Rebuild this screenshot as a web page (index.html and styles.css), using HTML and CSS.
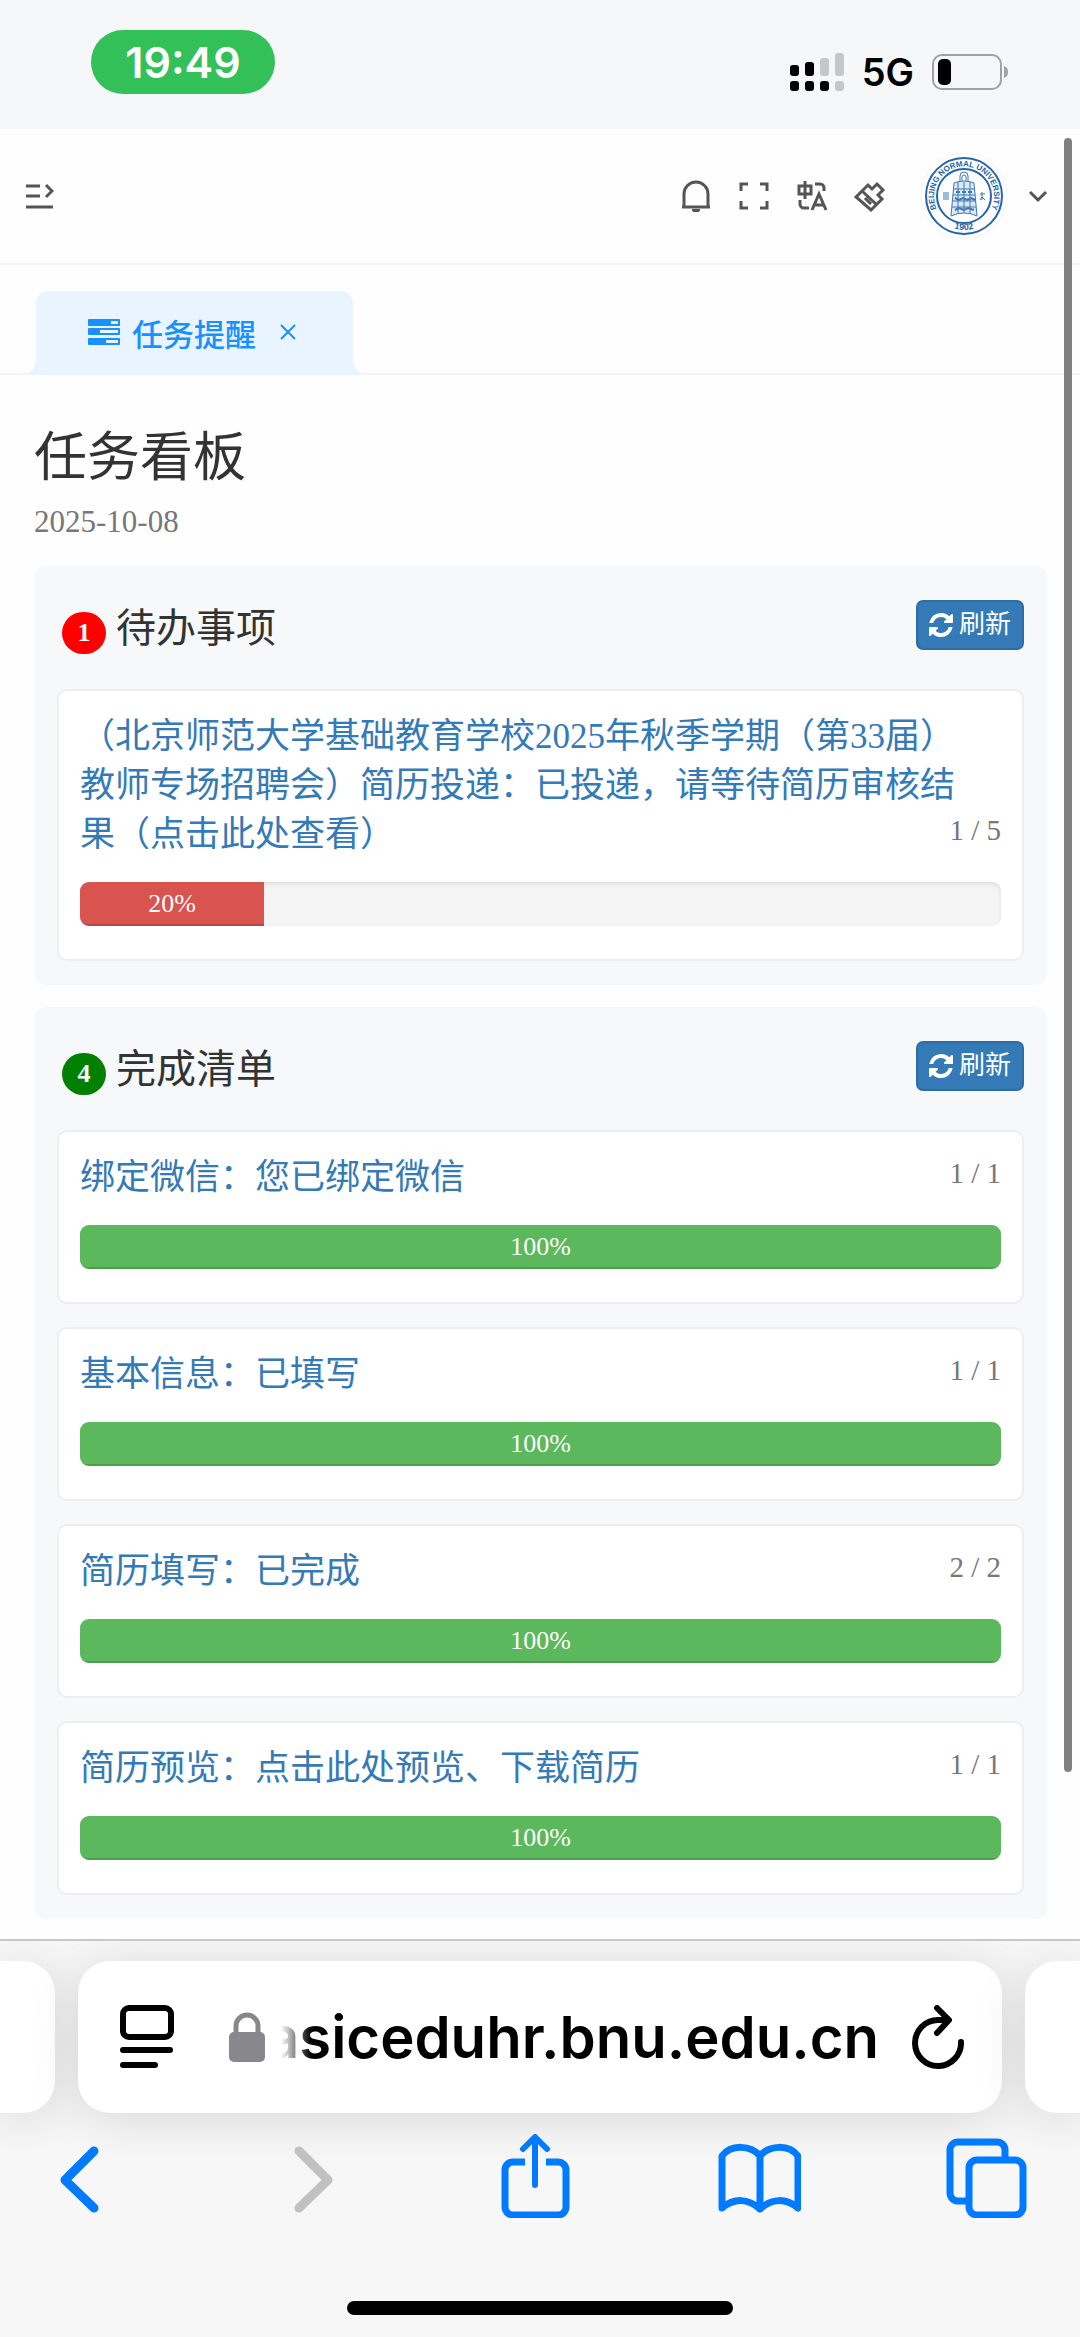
FILE: index.html
```html
<!DOCTYPE html>
<html lang="zh-CN">
<head>
    <meta charset="UTF-8">
    <meta name="viewport" content="width=device-width, initial-scale=1.0">
    <title>任务提醒</title>
    <link rel="stylesheet" href="styles.css">
</head>
<body>
    <div class="status-bar">
        <span class="clock">19:49</span>
        <div class="status-right">
            <svg width="54" height="38" viewBox="0 0 54 38">
                <g fill="#000">
                    <rect x="0" y="12" width="9" height="11" rx="3"/>
                    <rect x="15" y="9" width="9" height="14" rx="3"/>
                    <rect x="0" y="28" width="9" height="10" rx="3"/>
                    <rect x="15" y="28" width="9" height="10" rx="3"/>
                    <rect x="30" y="28" width="9" height="10" rx="3"/>
                </g>
                <g fill="#c6c7c9">
                    <rect x="30" y="5" width="9" height="18" rx="3"/>
                    <rect x="45" y="0" width="9" height="23" rx="3"/>
                    <rect x="45" y="28" width="9" height="10" rx="3"/>
                </g>
            </svg>
            <span class="network">5G</span>
            <svg width="76" height="36" viewBox="0 0 76 36">
                <rect x="1" y="1" width="68" height="34" rx="9" fill="none" stroke="#a0a1a3" stroke-width="2"/>
                <rect x="6" y="5" width="13" height="26" rx="5" fill="#000"/>
                <path d="M72 12c3 1 4 3 4 6s-1 5-4 6z" fill="#a0a1a3"/>
            </svg>
        </div>
    </div>

    <header class="header">
        <button class="icon-btn" type="button" aria-label="展开菜单">
            <svg width="28" height="26" viewBox="0 0 28 26" fill="none" stroke="#555" stroke-width="3">
                <path d="M0 3h14M0 13h14M0 24h27M20 2l6 6-6 6"/>
            </svg>
        </button>
        <div class="header-tools">
            <button class="icon-btn" type="button" aria-label="消息">
                <svg width="32" height="32" viewBox="0 0 32 32" fill="none" stroke="#555" stroke-width="3">
                    <path d="M4 27V14a12 12 0 0 1 24 0v13M2 27h28"/>
                    <path d="M12 29h8a4 4 0 0 1-8 0z" fill="#555" stroke="none"/>
                </svg>
            </button>
            <button class="icon-btn" type="button" aria-label="全屏">
                <svg width="32" height="32" viewBox="0 0 32 32" fill="none" stroke="#555" stroke-width="3">
                    <path d="M10 4H3v7M22 4h7v7M10 28H3v-7M22 28h7v-7"/>
                </svg>
            </button>
            <button class="icon-btn" type="button" aria-label="语言">
                <svg width="32" height="32" viewBox="0 0 32 32" fill="none" stroke="#555" stroke-width="3">
                    <path d="M3 6h12v8H3zM9 1v18"/>
                    <path d="M19 4h5a4 4 0 0 1 4 4v3M4 20v4a4 4 0 0 0 4 4h5"/>
                    <path d="M16 30l7-16 7 16M18 25h10"/>
                </svg>
            </button>
            <button class="icon-btn" type="button" aria-label="主题">
                <svg width="32" height="32" viewBox="0 0 32 32" fill="none" stroke="#555" stroke-width="3">
                    <path d="M2 17L14 5l4 4 5-5 6 6-5 5 4 4-11 11z"/>
                    <path d="M8 11l15 14M11 18l6 6"/>
                </svg>
            </button>
            <svg class="avatar" width="88" height="88" viewBox="0 0 88 88" role="img" aria-label="Beijing Normal University">
                <circle cx="44" cy="44" r="43" fill="#fff" stroke="#f4f4f4"/>
                <circle cx="44" cy="44" r="38" fill="none" stroke="#2465ab" stroke-width="2"/>
                <circle cx="44" cy="44" r="27" fill="none" stroke="#2465ab" stroke-width="2"/>
                <path id="ringTop" d="M22.600 65.400A30 30 0 1 1 65.400 65.400" fill="none"/>
                <path id="ringBottom" d="M30 75a34 34 0 0 0 28 0" fill="none"/>
                <text class="seal-text"><textPath href="#ringTop" startOffset="50%">BEIJING NORMAL UNIVERSITY</textPath></text>
                <text class="seal-text seal-year"><textPath href="#ringBottom" startOffset="50%">1902</textPath></text>
                <g fill="none" stroke="#3d78b5" stroke-width="1">
                    <path d="M40 30v-6a4 4 0 0 1 8 0v6M42 30v-5a2 2 0 0 1 4 0v5"/>
                    <path d="M34 31q10-4 20 0l3 33q-6-3-13-3t-13 3z" fill="#dce8f4"/>
                    <path d="M34 37h20M33 43h22M33 49h23M32 55h24M38 30v32M44 30v31M50 30v32"/>
                    <path d="M36 40h4M42 40h4M48 40h4M35 46l4 2 4-2 4 2 4-2 4 2M35 58l4-2 5 2 4-2 6 2" stroke-width="2"/>
                    <path d="M24 40v8M26 40v8M28 40v8M60 42h5M62 40v8M60 48l2-3 3 3"/>
                </g>
            </svg>
            <button class="icon-btn" type="button" aria-label="用户菜单">
                <svg width="20" height="20" viewBox="0 0 20 20" fill="none" stroke="#555" stroke-width="3">
                    <path d="M2 6l8 8 8-8"/>
                </svg>
            </button>
        </div>
    </header>

    <nav class="tabs">
        <a class="tab" href="#">
            <svg width="32" height="26" viewBox="0 0 32 26">
                <g fill="#1890ff">
                    <rect width="32" height="7" rx="1"/>
                    <rect y="9" width="32" height="7" rx="1"/>
                    <rect y="19" width="32" height="7" rx="1"/>
                </g>
                <g fill="#e8f4ff">
                    <rect x="23" y="2" width="7" height="3"/>
                    <rect x="12" y="11" width="18" height="3"/>
                    <rect x="18" y="21" width="12" height="3"/>
                </g>
            </svg>
            <span>任务提醒</span>
            <svg class="tab-close" width="16" height="16" viewBox="0 0 16 16" stroke="#1890ff" stroke-width="2">
                <path d="M1 1l14 14M15 1L1 15"/>
            </svg>
        </a>
    </nav>

    <main class="board">
        <h1>任务看板</h1>
        <p class="date">2025-10-08</p>

        <section class="panel">
            <div class="panel-head">
                <span class="badge todo">1</span>
                <h2>待办事项</h2>
                <button class="refresh" type="button">
                    <svg width="24" height="24" viewBox="0 0 1536 1536" fill="#fff"><path d="M1511 928q0 5-1 7-64 268-268 434.500T764 1536q-146 0-282.500-55T238 1324l-129 129q-19 19-45 19t-45-19-19-45V960q0-26 19-45t45-19h448q26 0 45 19t19 45-19 45l-137 137q71 66 161 102t187 36q134 0 250-65t186-179q11-17 53-117 8-23 30-23h192q13 0 22.500 9.500t9.500 22.500zm25-800v448q0 26-19 45t-45 19h-448q-26 0-45-19t-19-45 19-45l138-138Q969 256 768 256q-134 0-250 65T332 500q-11 17-53 117-8 23-30 23H50q-13 0-22.500-9.500T18 608v-7q65-268 270-434.500T768 0q146 0 284 55.500T1297 212l130-129q19-19 45-19t45 19 19 45z"/></svg>
                    刷新
                </button>
            </div>
            <div class="card">
                <div class="card-text">
                    <a href="#">（北京师范大学基础教育学校2025年秋季学期（第33届）教师专场招聘会）简历投递：已投递，请等待简历审核结果（点击此处查看）</a>
                    <span class="count">1 / 5</span>
                </div>
                <div class="progress"><div class="bar danger" style="width: 20%">20%</div></div>
            </div>
        </section>

        <section class="panel">
            <div class="panel-head">
                <span class="badge done">4</span>
                <h2>完成清单</h2>
                <button class="refresh" type="button">
                    <svg width="24" height="24" viewBox="0 0 1536 1536" fill="#fff"><path d="M1511 928q0 5-1 7-64 268-268 434.500T764 1536q-146 0-282.500-55T238 1324l-129 129q-19 19-45 19t-45-19-19-45V960q0-26 19-45t45-19h448q26 0 45 19t19 45-19 45l-137 137q71 66 161 102t187 36q134 0 250-65t186-179q11-17 53-117 8-23 30-23h192q13 0 22.500 9.500t9.500 22.500zm25-800v448q0 26-19 45t-45 19h-448q-26 0-45-19t-19-45 19-45l138-138Q969 256 768 256q-134 0-250 65T332 500q-11 17-53 117-8 23-30 23H50q-13 0-22.500-9.500T18 608v-7q65-268 270-434.500T768 0q146 0 284 55.500T1297 212l130-129q19-19 45-19t45 19 19 45z"/></svg>
                    刷新
                </button>
            </div>
            <div class="card">
                <div class="card-text">
                    <a href="#">绑定微信：您已绑定微信</a>
                    <span class="count">1 / 1</span>
                </div>
                <div class="progress"><div class="bar success" style="width: 100%">100%</div></div>
            </div>
            <div class="card">
                <div class="card-text">
                    <a href="#">基本信息：已填写</a>
                    <span class="count">1 / 1</span>
                </div>
                <div class="progress"><div class="bar success" style="width: 100%">100%</div></div>
            </div>
            <div class="card">
                <div class="card-text">
                    <a href="#">简历填写：已完成</a>
                    <span class="count">2 / 2</span>
                </div>
                <div class="progress"><div class="bar success" style="width: 100%">100%</div></div>
            </div>
            <div class="card">
                <div class="card-text">
                    <a href="#">简历预览：点击此处预览、下载简历</a>
                    <span class="count">1 / 1</span>
                </div>
                <div class="progress"><div class="bar success" style="width: 100%">100%</div></div>
            </div>
        </section>
    </main>

    <footer class="browser-bar">
        <div class="address-row">
            <div class="pill side left"></div>
            <div class="pill address">
                <button class="icon-btn" type="button" aria-label="页面菜单">
                    <svg width="54" height="64" viewBox="0 0 54 64" fill="none" stroke="#000" stroke-width="6" stroke-linecap="round">
                        <rect x="3" y="3" width="48" height="29" rx="6"/>
                        <path d="M3 45h47M3 60h32"/>
                    </svg>
                </button>
                <svg class="lock" width="36" height="50" viewBox="0 0 36 50">
                    <rect y="20" width="36" height="30" rx="5" fill="#88888c"/>
                    <path d="M7 22V14a11 11 0 0 1 22 0v8" fill="none" stroke="#88888c" stroke-width="5"/>
                </svg>
                <div class="url"><span>asiceduhr.bnu.edu.cn</span></div>
                <button class="icon-btn" type="button" aria-label="重新加载">
                    <svg width="52" height="64" viewBox="0 0 52 64" fill="none" stroke="#000" stroke-width="6" stroke-linecap="round" stroke-linejoin="round">
                        <path d="M49 37a23 23 0 1 1-23-22h9"/>
                        <path d="M25 3l12 12-12 13"/>
                    </svg>
                </button>
            </div>
            <div class="pill side right"></div>
        </div>
        <div class="toolbar">
            <button class="icon-btn" type="button" aria-label="后退">
                <svg width="84" height="84" viewBox="0 0 84 84" fill="none" stroke="#007aff" stroke-width="9" stroke-linecap="round" stroke-linejoin="round">
                    <path d="M57 17L28 46l29 28"/>
                </svg>
            </button>
            <button class="icon-btn" type="button" aria-label="前进" disabled>
                <svg width="84" height="84" viewBox="0 0 84 84" fill="none" stroke="#c1c1c1" stroke-width="9" stroke-linecap="round" stroke-linejoin="round">
                    <path d="M35 17l29 29-29 28"/>
                </svg>
            </button>
            <button class="icon-btn" type="button" aria-label="分享">
                <svg width="84" height="84" viewBox="0 0 84 84" fill="none" stroke="#007aff" stroke-width="7" stroke-linecap="round" stroke-linejoin="round">
                    <path d="M34 28H22a8 8 0 0 0-8 8v37a8 8 0 0 0 8 8h45a8 8 0 0 0 8-8V36a8 8 0 0 0-8-8H55" stroke-linecap="butt"/>
                    <path d="M44 51V4M32 15L44 3l12 12" stroke-width="6"/>
                </svg>
            </button>
            <button class="icon-btn" type="button" aria-label="书签">
                <svg width="84" height="84" viewBox="0 0 84 84" fill="none" stroke="#007aff" stroke-width="7" stroke-linecap="round" stroke-linejoin="round">
                    <path d="M43 22C34 11 14 10 5 22v52c12-10 26-10 38 1 12-11 26-11 38-1V22C72 10 52 11 43 22v53"/>
                </svg>
            </button>
            <button class="icon-btn" type="button" aria-label="标签页">
                <svg width="84" height="84" viewBox="0 0 84 84" fill="none" stroke="#007aff" stroke-width="7">
                    <path d="M61 23V16a8 8 0 0 0-8-8H14a8 8 0 0 0-8 8v43a8 8 0 0 0 8 8h10"/>
                    <rect x="25" y="26" width="54" height="55" rx="8"/>
                </svg>
            </button>
        </div>
        <div class="home-indicator"></div>
    </footer>

    <div class="scroll-thumb"></div>
</body>
</html>
```
FILE: styles.css
```css
* {
    box-sizing: border-box;
}
body {
    margin: 0;
    min-height: 100vh;
    display: flex;
    flex-direction: column;
    background-color: #fefefe;
    font-family: "Liberation Serif", "Noto Sans CJK SC", serif;
    font-weight: 400;
    color: #333;
    position: relative;
}
h1, h2, p {
    margin: 0;
    font-weight: normal;
}
a {
    text-decoration: none;
}
svg {
    display: block;
    flex-shrink: 0;
}
.icon-btn {
    padding: 0;
    border: none;
    background: none;
    cursor: pointer;
}

/* status bar */
.status-bar {
    height: 129px;
    padding: 0 72px 6px 91px;
    background-color: #f6f7f9;
    display: flex;
    justify-content: space-between;
    align-items: center;
    font-family: Inter, sans-serif;
    font-weight: 600;
}
.clock {
    width: 184px;
    height: 64px;
    line-height: 64px;
    border-radius: 32px;
    background-color: #33c058;
    color: white;
    font-size: 43px;
    text-align: center;
}
.status-right {
    display: flex;
    align-items: center;
    gap: 18px;
    padding-top: 20px;
}
.network {
    color: #000;
    font-size: 38px;
    line-height: 38px;
}

/* page header */
.header {
    height: 136px;
    padding: 0 32px 0 26px;
    background-color: #fefefe;
    border-bottom: 2px solid #f4f4f4;
    display: flex;
    justify-content: space-between;
    align-items: center;
}
.header-tools {
    display: flex;
    align-items: center;
    gap: 26px;
}
.avatar {
    margin: 0 -6px 0 8px;
}
.seal-text {
    font-family: "Liberation Sans", Arial, sans-serif;
    font-size: 8px;
    font-weight: bold;
    fill: #2465ab;
    text-anchor: middle;
}
.seal-year {
    font-size: 9px;
}

/* tabs */
.tabs {
    height: 110px;
    padding: 0 36px;
    display: flex;
    align-items: flex-end;
    background-color: #fefefe;
    border-bottom: 2px solid #f4f4f4;
}
.tab {
    position: relative;
    height: 84px;
    margin-bottom: -2px;
    padding: 0 57px 2px 52px;
    display: flex;
    align-items: center;
    gap: 12px;
    background-color: #e8f4ff;
    border-radius: 12px 12px 0 0;
    color: #1890ff;
    font-family: "Noto Sans CJK SC", sans-serif;
    font-size: 31px;
    font-weight: 500;
}
.tab::before,
.tab::after {
    content: "";
    position: absolute;
    bottom: 0;
    width: 16px;
    height: 16px;
}
.tab::before {
    left: -16px;
    background: radial-gradient(circle at 0 0, transparent 16px, #e8f4ff 16px);
}
.tab::after {
    right: -16px;
    background: radial-gradient(circle at 100% 0, transparent 16px, #e8f4ff 16px);
}
.tab-close {
    margin-left: 12px;
}

/* board */
.board {
    padding: 43px 33px 20px 34px;
}
h1 {
    font-size: 53px;
    line-height: 80px;
}
.date {
    font-size: 31px;
    line-height: 48px;
    margin-bottom: 20px;
    color: #777;
}
.panel {
    padding: 22px 23px 1px;
    margin-bottom: 22px;
    background-color: #f6f8fa;
    border-radius: 12px;
}
.panel:last-child {
    margin-bottom: 0;
}
.panel-head {
    display: flex;
    align-items: center;
    height: 78px;
    margin-bottom: 23px;
    padding-left: 5px;
}
.badge {
    min-width: 44px;
    height: 42px;
    margin: 12px 10px 0 0;
    border-radius: 21px;
    color: white;
    font-size: 26px;
    font-weight: bold;
    line-height: 42px;
    text-align: center;
}
.badge.todo {
    background-color: #f00;
}
.badge.done {
    background-color: #008000;
}
h2 {
    padding-top: 4px;
    font-size: 40px;
    line-height: 60px;
}
.refresh {
    margin: 0 0 4px auto;
    height: 50px;
    padding: 0 11px;
    display: flex;
    align-items: center;
    gap: 6px;
    border: 2px solid #2e6da4;
    border-radius: 7px;
    background-color: #337ab7;
    color: white;
    font-family: inherit;
    font-size: 26px;
    line-height: 40px;
    cursor: pointer;
}
.refresh:hover {
    background-color: #286090;
}
.card {
    padding: 21px 21px 33px;
    margin-bottom: 23px;
    border: 2px solid #eee;
    border-radius: 10px;
    background-color: white;
}
.card-text {
    margin-bottom: 23px;
    padding-right: 20px;
    font-size: 35px;
    line-height: 49px;
}
.card-text a {
    color: #337ab7;
}
.count {
    float: right;
    margin-right: -20px;
    color: #777;
    font-size: 29px;
    line-height: 40px;
}
.progress {
    height: 44px;
    border-radius: 9px;
    background-color: #f5f5f5;
    box-shadow: inset 0 2px 4px rgba(0,0,0,0.1);
    overflow: hidden;
}
.bar {
    height: 100%;
    color: white;
    font-size: 26px;
    line-height: 44px;
    text-align: center;
    box-shadow: inset 0 -2px 0 rgba(0,0,0,0.15);
}
.bar.danger {
    background-color: #d9534f;
}
.bar.success {
    background-color: #5cb85c;
}

/* browser bar */
.browser-bar {
    flex: 1;
    border-top: 2px solid #c8c8ca;
    background-color: #f7f7f8;
    display: flex;
    flex-direction: column;
    overflow: hidden;
}
.address-row {
    display: flex;
    gap: 23px;
    padding-top: 20px;
}
.pill {
    height: 152px;
    background-color: white;
    box-shadow: 0 6px 50px rgba(0,0,0,0.13);
}
.side {
    width: 55px;
}
.left {
    border-radius: 0 32px 32px 0;
}
.right {
    border-radius: 32px 0 0 32px;
}
.address {
    flex: 1;
    min-width: 0;
    border-radius: 32px;
    padding: 0 38px 0 42px;
    display: flex;
    align-items: center;
}
.lock {
    margin-left: 55px;
}
.url {
    flex: 1;
    min-width: 0;
    margin: 0 33px 0 16px;
    height: 80px;
    overflow: hidden;
    display: flex;
    justify-content: flex-end;
    color: #000;
    font-family: Inter, sans-serif;
    font-size: 58px;
    font-weight: 600;
    line-height: 80px;
    mask-image: linear-gradient(to right, transparent, #000 30px);
}
.toolbar {
    display: flex;
    justify-content: space-between;
    padding: 21px 52px 0 37px;
}
.home-indicator {
    width: 386px;
    height: 14px;
    margin: auto auto 22px;
    border-radius: 7px;
    background-color: #000;
}

.scroll-thumb {
    position: absolute;
    top: 138px;
    right: 8px;
    width: 8px;
    height: 1634px;
    border-radius: 4px;
    background-color: #808080;
}
```
